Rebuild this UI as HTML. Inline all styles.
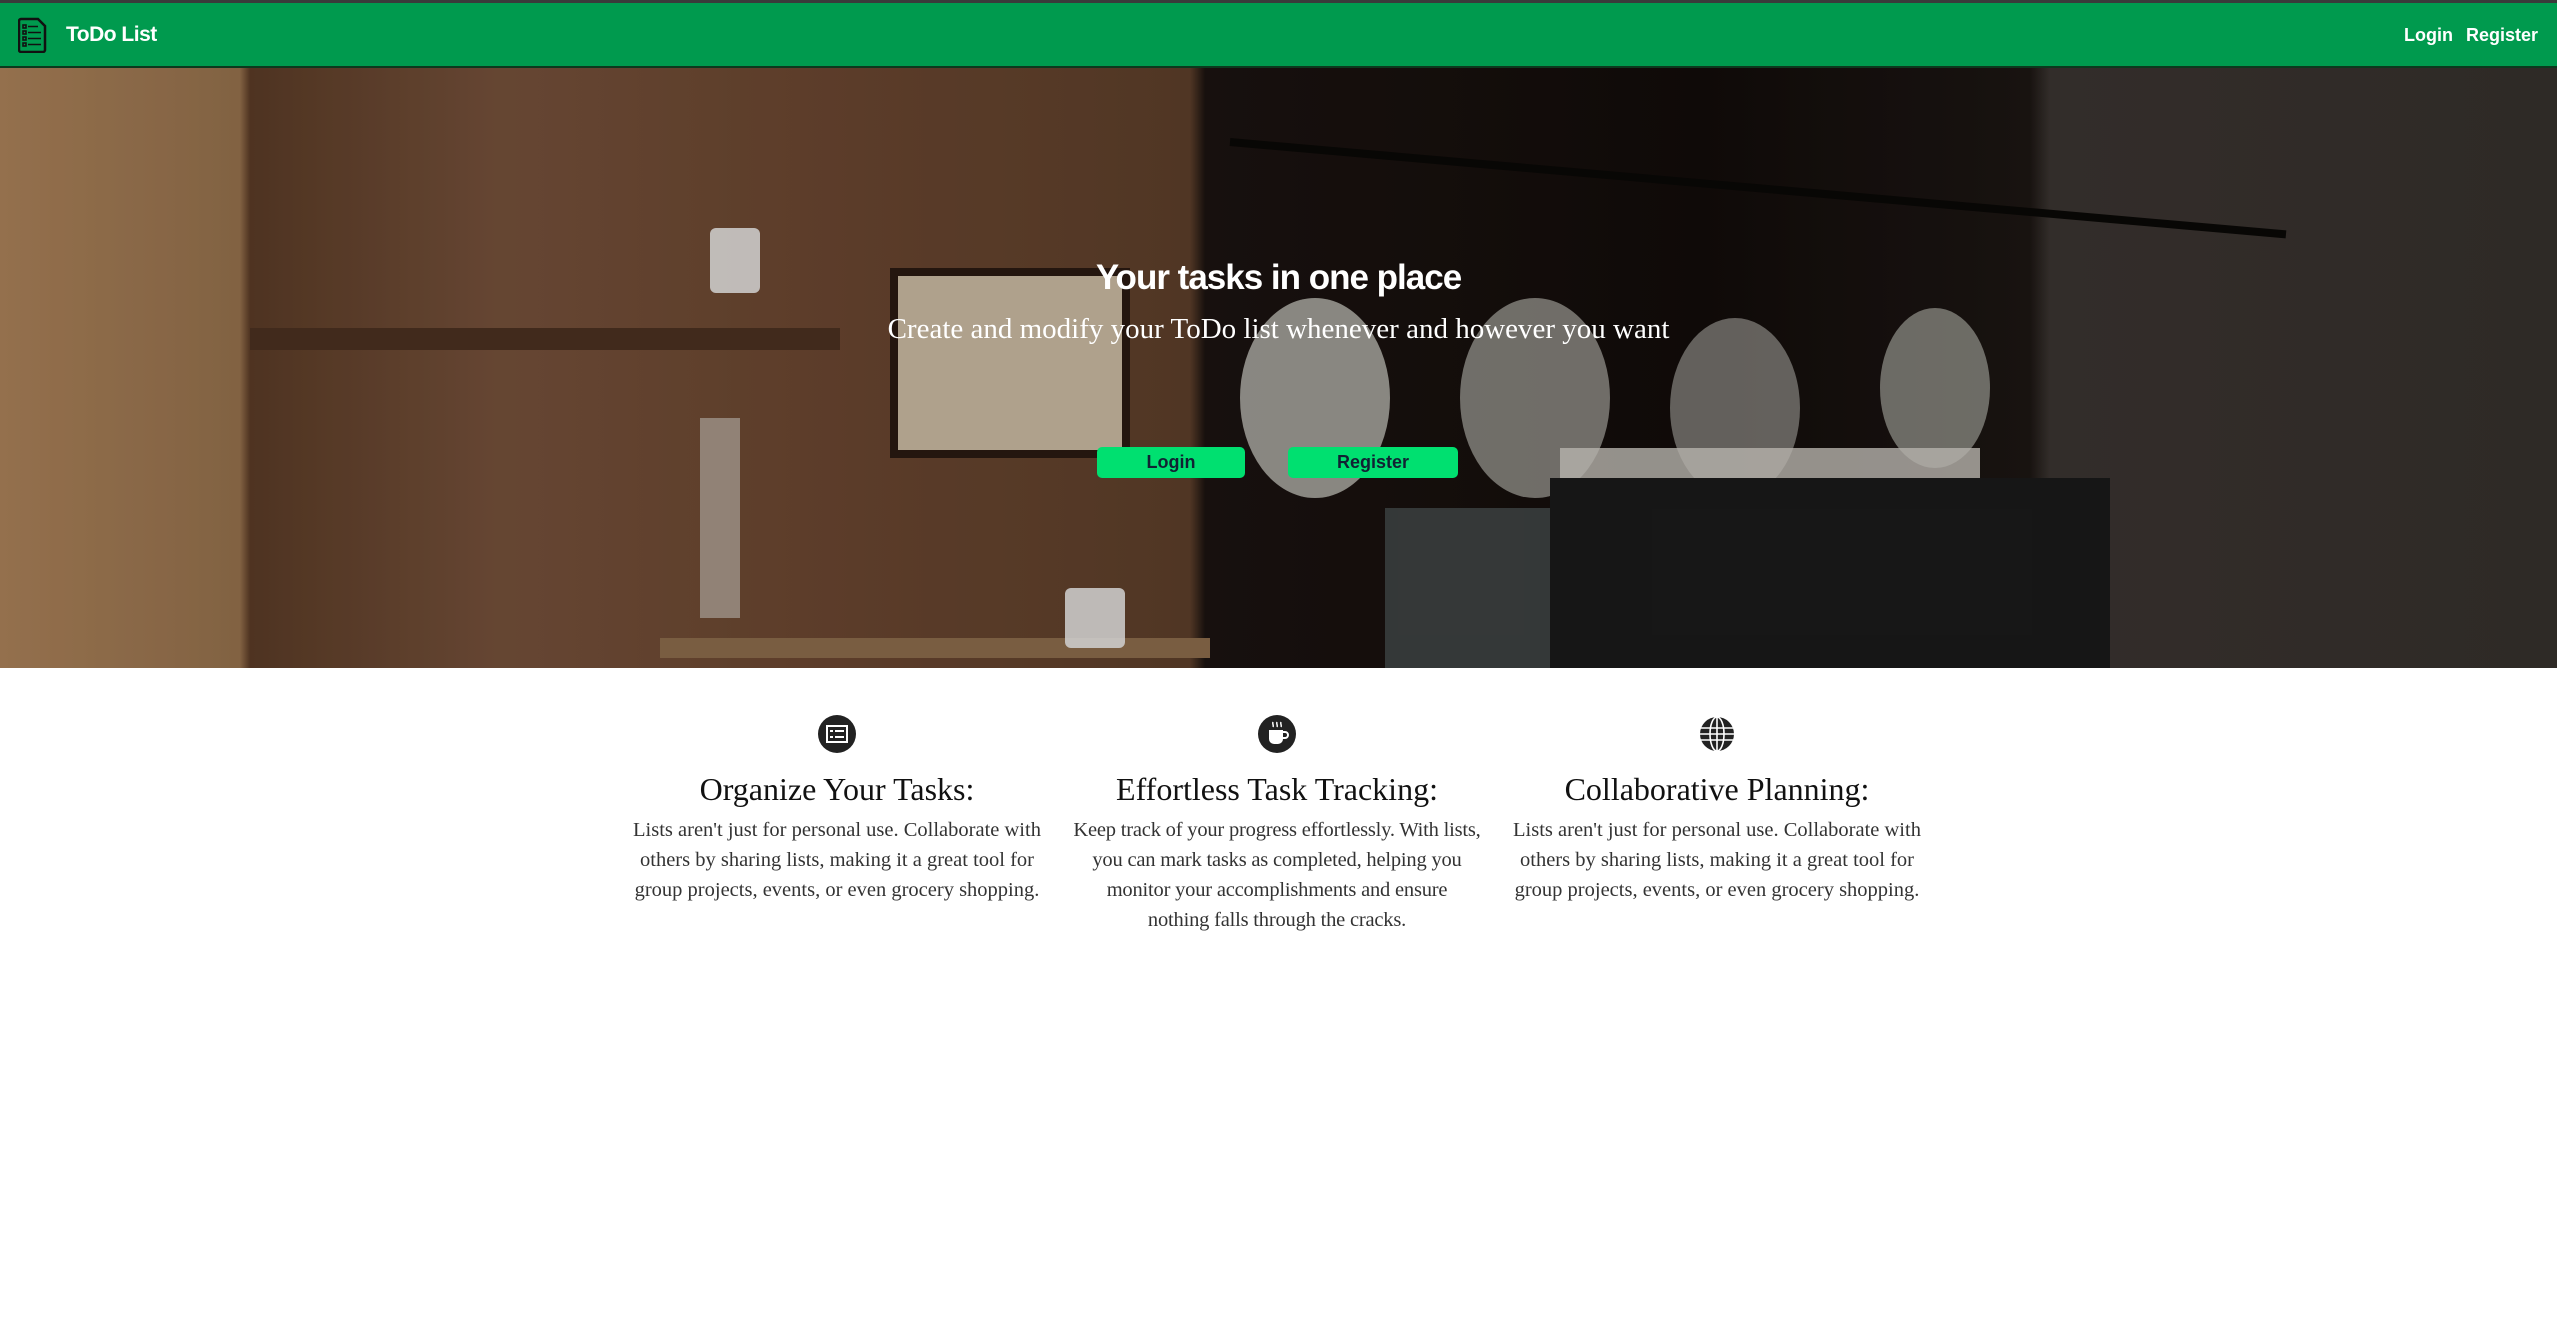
<!DOCTYPE html>
<html><head><meta charset="utf-8"><style>
*{margin:0;padding:0;box-sizing:border-box}
body{width:2557px;height:1322px;background:#fff;font-family:"Liberation Serif",serif;overflow:hidden;position:relative}
.nav{position:absolute;left:0;top:0;width:2557px;height:68px;background:#009a4e;border-top:3px solid #3a3a3a;border-bottom:2px solid #0b3a1e}
.nav .brand{position:absolute;left:66px;top:20px;color:#fff;font:bold 21px "Liberation Sans",sans-serif;letter-spacing:-0.5px}
.nav .r{position:absolute;top:22px;color:#fff;font:bold 18px "Liberation Sans",sans-serif}
.hero{position:absolute;left:0;top:68px;width:2557px;height:600px;overflow:hidden;
background:linear-gradient(90deg,#a98058 0,#94704c 240px,#5a3b26 250px,#74503a 500px,#6a4630 800px,#5c3e2a 1190px,#1b1310 1205px,#120c0a 1700px,#1c1613 2030px,#3a3430 2050px,#35302c 2557px)}
.hero .s{position:absolute}
h1{position:absolute;top:190px;left:0;width:2557px;text-align:center;color:#fff;font:bold 35px "Liberation Sans",sans-serif;letter-spacing:-1px}
.sub{position:absolute;top:245px;left:0;width:2557px;text-align:center;color:#fff;font:29px "Liberation Serif",serif}
.btn{position:absolute;top:447px;height:31px;background:#00e070;border-radius:5px;color:#123;font:bold 18px "Liberation Sans",sans-serif;text-align:center;line-height:31px}
.col{position:absolute;top:715px;width:410px;text-align:center;color:#222}
.col .ic{width:38px;height:38px;margin:0 auto;border-radius:50%;background:#222}
.col h2{font:normal 32px "Liberation Serif",serif;margin-top:18px;color:#111}
.col p{font:20.5px/30px "Liberation Serif",serif;margin-top:7px;color:#333}
</style></head><body>
<div class="nav">
<svg style="position:absolute;left:18px;top:14px" width="30" height="36" viewBox="0 0 30 36"><path d="M3 2h17l7 7v24a2 2 0 0 1-2 2H3a2 2 0 0 1-2-2V4a2 2 0 0 1 2-2z" fill="#009a4e" stroke="#111" stroke-width="2.5"/><g fill="none" stroke="#111" stroke-width="1.6"><rect x="5" y="8" width="3" height="3"/><rect x="5" y="14" width="3" height="3"/><rect x="5" y="20" width="3" height="3"/><rect x="5" y="26" width="3" height="3"/><path d="M10 9.5h10M10 15.5h13M10 21.5h13M10 27.5h13"/></g></svg>
<div class="brand">ToDo List</div>
<div class="r" style="left:2404px">Login</div>
<div class="r" style="left:2466px">Register</div>
</div>
<div class="hero">
<div class="s" style="left:250px;top:260px;width:590px;height:22px;background:#4a3020"></div>
<div class="s" style="left:660px;top:570px;width:550px;height:20px;background:#8a6a4a"></div>
<div class="s" style="left:890px;top:200px;width:240px;height:190px;background:#c8b8a0;border:8px solid #2a1a12"></div>
<div class="s" style="left:1240px;top:230px;width:150px;height:200px;border-radius:50%;background:#c8c8c0;opacity:.75"></div>
<div class="s" style="left:1460px;top:230px;width:150px;height:200px;border-radius:50%;background:#c8c8c0;opacity:.6"></div>
<div class="s" style="left:1670px;top:250px;width:130px;height:180px;border-radius:50%;background:#c0c0b8;opacity:.55"></div>
<div class="s" style="left:1880px;top:240px;width:110px;height:160px;border-radius:50%;background:#c0c0b8;opacity:.6"></div>
<div class="s" style="left:1385px;top:440px;width:300px;height:170px;background:#3c4040"></div>
<div class="s" style="left:1550px;top:410px;width:560px;height:200px;background:#1a1a1a"></div>
<div class="s" style="left:1560px;top:380px;width:420px;height:30px;background:#d0ccc4;opacity:.8"></div>
<div class="s" style="left:1230px;top:70px;width:1060px;height:8px;background:#0a0806;transform:rotate(5deg);transform-origin:left"></div>
<div class="s" style="left:700px;top:350px;width:40px;height:200px;background:#ccc8c0;opacity:.6"></div>
<div class="s" style="left:710px;top:160px;width:50px;height:65px;background:#eee;border-radius:6px;opacity:.85"></div>
<div class="s" style="left:1065px;top:520px;width:60px;height:60px;background:#eee;border-radius:6px;opacity:.85"></div>
<div class="s" style="left:0;top:0;width:2557px;height:600px;background:rgba(0,0,0,0.12)"></div>
<h1>Your tasks in one place</h1>
<div class="sub">Create and modify your ToDo list whenever and however you want</div>
</div>
<div class="btn" style="left:1097px;width:148px;top:447px">Login</div>
<div class="btn" style="left:1288px;width:170px;top:447px">Register</div>

<div class="col" style="left:632px"><div class="ic"><svg width="38" height="38" viewBox="0 0 38 38"><rect x="9" y="11" width="20" height="16" fill="none" stroke="#fff" stroke-width="2"/><path d="M12 16h3M17 16h9M12 22h3M17 22h9" stroke="#fff" stroke-width="2"/></svg></div><h2>Organize Your Tasks:</h2><p>Lists aren't just for personal use. Collaborate with others by sharing lists, making it a great tool for group projects, events, or even grocery shopping.</p></div>
<div class="col" style="left:1052px;width:450px"><div class="ic"><svg width="38" height="38" viewBox="0 0 38 38"><path d="M11 15h14v9a5 5 0 0 1-5 5h-4a5 5 0 0 1-5-5z" fill="#fff"/><path d="M25 17h2a3 3 0 0 1 0 6h-2" fill="none" stroke="#fff" stroke-width="2"/><path d="M15 7c-1 2 1 3 0 5M19 7c-1 2 1 3 0 5M23 7c-1 2 1 3 0 5" stroke="#fff" stroke-width="1.5" fill="none"/></svg></div><h2>Effortless Task Tracking:</h2><p style="letter-spacing:-0.2px">Keep track of your progress effortlessly. With lists,<br>you can mark tasks as completed, helping you<br>monitor your accomplishments and ensure<br>nothing falls through the cracks.</p></div>
<div class="col" style="left:1512px"><div class="ic" style="background:#fff"><svg width="38" height="38" viewBox="0 0 38 38"><circle cx="19" cy="19" r="17" fill="#222"/><g stroke="#fff" stroke-width="1.6" fill="none"><ellipse cx="19" cy="19" rx="7" ry="17"/><path d="M19 2v34M3 13h32M2 19h34M3 25h32"/></g></svg></div><h2>Collaborative Planning:</h2><p>Lists aren't just for personal use. Collaborate with others by sharing lists, making it a great tool for group projects, events, or even grocery shopping.</p></div>
</body></html>
